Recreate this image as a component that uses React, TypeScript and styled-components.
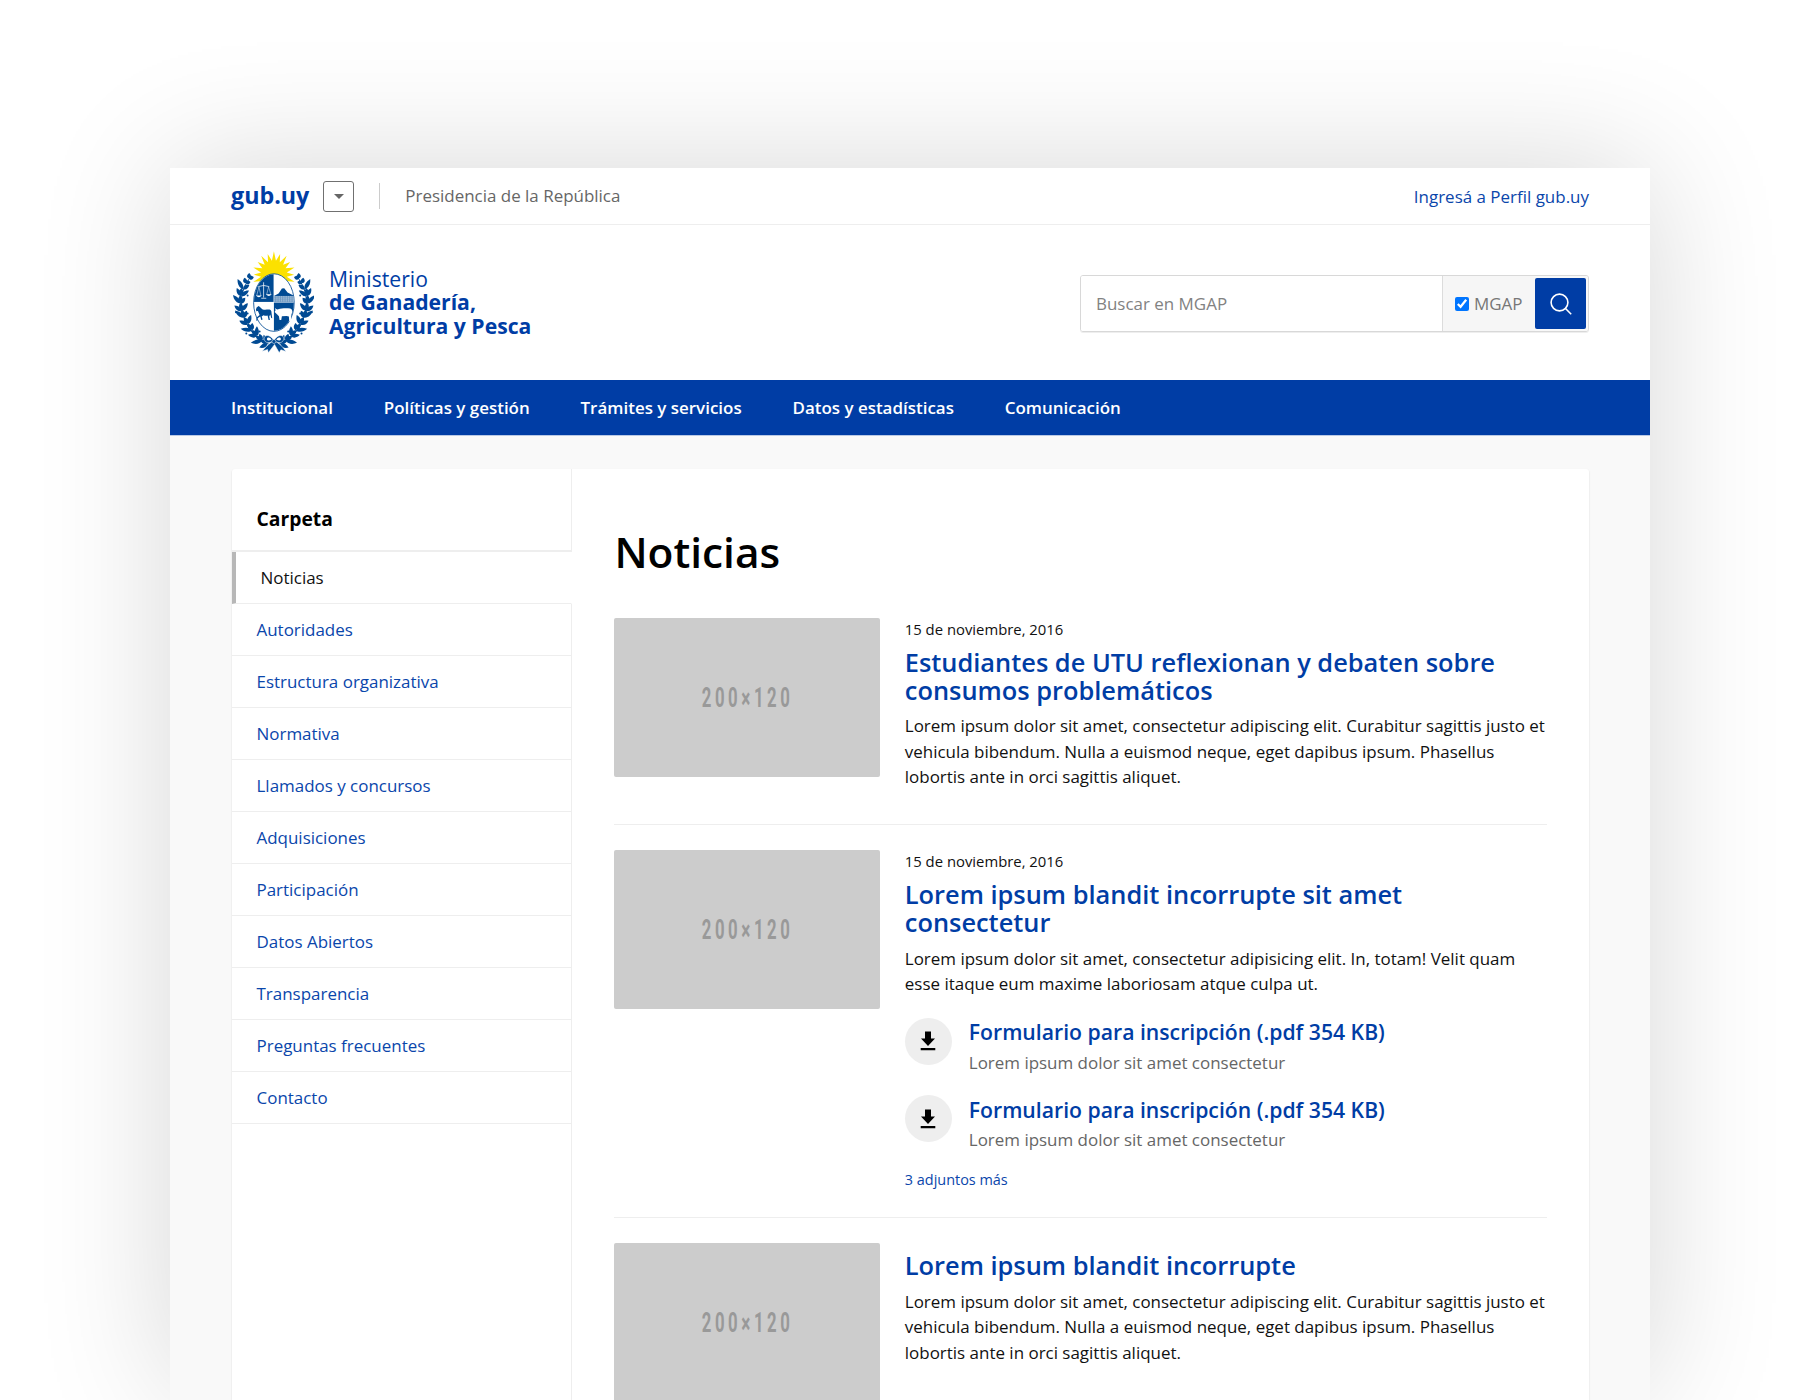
import React from "react";
import styled, { createGlobalStyle, css } from "styled-components";

const BLUE = "#003da5";
const LINK = "#0a46ab";
const LINE = "#eeeeee";
const CREST = "#004a93";

const Global = createGlobalStyle`
  html, body { margin: 0; background: #fff; }
  body { overflow: hidden; font-family: "Open Sans", "Noto Sans", sans-serif; font-size: 16.97px; line-height: 25.37px; color: #111; }
  *, *::before, *::after { box-sizing: border-box; }
  h1, h2, h3, p, ul { margin: 0; padding: 0; }
  ul { list-style: none; }
  a { color: inherit; text-decoration: none; }
`;

const Stage = styled.div`
  height: 1400px;
  overflow: hidden;
  padding: 168px 170px 0;
`;

const Backdrop = styled.div`
  height: 1222px;
  box-shadow: 0 0 125px rgba(0, 0, 0, 0.16);
`;

const Page = styled.div`
  height: 1600px;
  display: flex;
  flex-direction: column;
  background: #f9f9f9;
`;

const TopBar = styled.div`
  flex: none;
  display: flex;
  align-items: center;
  height: 57px;
  padding: 0 61px;
  background: #fff;
  border-bottom: 1px solid ${LINE};
`;

const Brand = styled.a`
  font-size: 23.25px;
  font-weight: 700;
  color: ${BLUE};
`;

const DropButton = styled.button`
  display: grid;
  place-items: center;
  width: 31px;
  height: 31px;
  margin: 0 25px 0 14px;
  padding: 0;
  background: #fff;
  border: 1px solid #707070;
  border-radius: 3px;
`;

const Caret = styled.span`
  border: solid transparent;
  border-width: 5px 5px 0;
  border-top-color: #666;
`;

const Separator = styled.span`
  width: 1px;
  height: 26px;
  margin-right: 25px;
  background: #ccc;
`;

const Office = styled.span`
  color: #666;
`;

const Profile = styled.a`
  margin-left: auto;
  padding-top: 2px;
  color: ${LINK};
`;

const Header = styled.header`
  flex: none;
  display: flex;
  align-items: center;
  justify-content: space-between;
  height: 155px;
  padding: 0 61px 0 62.5px;
  background: #fff;
`;

const Identity = styled.a`
  display: flex;
  align-items: center;
  gap: 15px;
`;

const Ministry = styled.span`
  margin-top: -1px;
  font-size: 21.17px;
  line-height: 23.4px;
  color: ${BLUE};
  b { display: block; font-weight: 700; }
`;

const SearchBox = styled.form`
  display: flex;
  width: 509px;
  height: 57px;
  margin-top: 2px;
  border: 1px solid #d8d8d8;
  border-radius: 3px;
  box-shadow: 0 1px 0 #eee;
  overflow: hidden;
`;

const SearchField = styled.input`
  flex: 1;
  min-width: 0;
  padding: 0 15px;
  border: 0;
  outline: 0;
  font: inherit;
  &::placeholder { color: #828282; opacity: 1; }
`;

const Scope = styled.label`
  display: flex;
  align-items: center;
  gap: 5px;
  padding: 0 12.5px;
  background: #f6f6f6;
  border-left: 1px solid #dcdcdc;
  color: #777;
`;

const Check = styled.input`
  width: 14px;
  height: 14px;
  margin: 0;
  accent-color: #0075ff;
`;

const SearchButton = styled.button`
  display: grid;
  place-items: center start;
  flex: none;
  width: 53px;
  padding: 0;
  border: 0;
  background: #f8f8f8;
  span {
    display: grid;
    place-items: center;
    width: 51px;
    height: 51px;
    background: ${BLUE};
    border-radius: 2px;
  }
`;

const Nav = styled.nav`
  flex: none;
  display: flex;
  align-items: center;
  gap: 50.8px;
  height: 56px;
  padding: 0 61px;
  background: ${BLUE};
  border-bottom: 1px solid #b9c9e6;
  color: #fff;
  font-weight: 600;
`;

const Panel = styled.main`
  flex: 1;
  display: flex;
  margin: 33px 61px 0 61.5px;
  background: #fff;
  border-radius: 3px;
  box-shadow: 0 1px 2px rgba(0, 0, 0, 0.14);
`;

const Sidebar = styled.aside`
  flex: none;
  width: 340.5px;
  display: flex;
  flex-direction: column;
`;

const SideTitle = styled.h3`
  height: 83px;
  padding: 37px 25px 0;
  border-right: 1px solid ${LINE};
  border-bottom: 2px solid ${LINE};
  font-size: 19.3px;
  line-height: 25px;
  font-weight: 700;
  color: #000;
`;

const SideItem = styled.li<{ $active?: boolean }>`
  height: 52px;
  padding: 13px 25px 0;
  border-bottom: 1px solid ${LINE};
  border-right: 1px solid ${LINE};
  color: ${LINK};
  ${(p) =>
    p.$active &&
    css`
      color: #111;
      border-left: 4px solid #b7b7b7;
      border-right-color: #fff;
    `}
`;

const SideRest = styled.div`
  flex: 1;
  border-right: 1px solid ${LINE};
`;

const Content = styled.section`
  flex: 1;
  min-width: 0;
  padding: 59px 41.6px 0 42.4px;
`;

const PageTitle = styled.h1`
  margin-bottom: 42px;
  font-size: 42.4px;
  line-height: 48px;
  font-weight: 600;
  color: #000;
`;

const Article = styled.article<{ $pad: string }>`
  display: flex;
  gap: 25px;
  padding-bottom: ${(p) => p.$pad};
  margin-bottom: 25.3px;
  border-bottom: 1px solid ${LINE};
`;

const Thumb = styled.div`
  flex: none;
  display: flex;
  align-items: center;
  justify-content: center;
  width: 265.4px;
  height: 159px;
  background: #ccc;
  border-radius: 2px;
`;

const ThumbLabel = styled.span`
  display: flex;
  align-items: center;
  padding: 2px 0 0 2px;
  font-family: Roboto, sans-serif;
  font-weight: 700;
  font-size: 27.4px;
  letter-spacing: 5.8px;
  color: #999;
  transform: scaleX(0.61);
  small { font-size: 28px; letter-spacing: 6px; }
`;

const Body = styled.div`
  flex: 1;
  min-width: 0;
`;

const DateLine = styled.div`
  margin-bottom: 8px;
  font-size: 14.85px;
  line-height: 22px;
`;

const Headline = styled.h2<{ $top?: boolean }>`
  padding-top: ${(p) => (p.$top ? "8px" : "0")};
  margin-bottom: 9.4px;
  font-size: 25.4px;
  line-height: 28px;
  font-weight: 600;
  color: ${BLUE};
`;

const Files = styled.ul`
  display: flex;
  flex-direction: column;
  gap: 17px;
  padding-top: 21px;
`;

const FileRow = styled.li`
  display: flex;
  gap: 17px;
  height: 60.3px;
`;

const Disc = styled.span`
  flex: none;
  display: grid;
  place-items: center;
  width: 47px;
  height: 47px;
  margin-top: 0.5px;
  border-radius: 50%;
  background: #eee;
`;

const FileTitle = styled.h3`
  padding-top: 1px;
  font-size: 21.2px;
  line-height: 27px;
  font-weight: 600;
  color: ${BLUE};
`;

const FileNote = styled.p`
  padding-top: 4.5px;
  color: #666;
`;

const More = styled.a`
  display: block;
  margin-top: 14px;
  font-size: 14.45px;
  line-height: 22px;
  color: ${LINK};
`;

/* Points along one branch of the laurel, from the knot to the tip. */
const branch: [number, number, number][] = [
  [322, 552, 200], [306, 543, 210], [291, 529, 222], [276, 512, 233],
  [263, 494, 243], [252, 474, 253], [245, 454, 262], [242, 432, 268],
  [243, 410, 277], [249, 389, 287], [257, 371, 297], [267, 357, 306],
];

const Leaf = ({ x, y, a, l = 25 }: { x: number; y: number; a: number; l?: number }) => (
  <path
    d={`M0 0C${l * 0.25} -10 ${l * 0.7} -8 ${l} 0C${l * 0.6} 7 ${l * 0.25} 7 0 0Z`}
    transform={`translate(${x} ${y}) rotate(${a})`}
  />
);

const Laurel = () => (
  <g fill={CREST}>
    <path d="M330 556C280 538 245 490 243 430C243 398 254 374 272 350" fill="none" stroke={CREST} strokeWidth="3" />
    {branch.map(([x, y, a], i) => (
      <g key={i}>
        <Leaf x={x} y={y} a={a - 46 + (i % 3) * 5} l={i > 9 ? 17 : i % 2 ? 35 : 28} />
        <Leaf x={x} y={y} a={a + 46 - (i % 2) * 8} l={i > 9 ? 14 : i % 2 ? 22 : 29} />
        {i < 9 && <Leaf x={x} y={y - 3} a={a - 4} l={22} />}
      </g>
    ))}
    {[[234, 396], [262, 408], [227, 458], [262, 462], [258, 522], [298, 516]].map(([x, y]) => (
      <circle key={`${x}-${y}`} cx={x} cy={y} r="3" />
    ))}
  </g>
);

const sunPoints = Array.from({ length: 40 }, (_, i) => {
  const t = (i / 40) * Math.PI * 2 - Math.PI / 2;
  const r = i % 2 ? 42 : i % 4 ? 65 : 70;
  return `${(341 + Math.cos(t) * r * 0.93).toFixed(1)},${(345 + Math.sin(t) * r).toFixed(1)}`;
}).join(" ");

const Crest = () => (
  <svg width="81.5" height="102.5" viewBox="218 274 245 308">
    <polygon points={sunPoints} fill="#fbe100" />
    <Laurel />
    <g transform="translate(682 0) scale(-1 1)"><Laurel /></g>
    <clipPath id="lower"><rect x="270" y="380" width="142" height="150" /></clipPath>
    <ellipse cx="341" cy="429" rx="66" ry="91" fill="#fff" clipPath="url(#lower)" />
    <ellipse cx="341" cy="429" rx="61" ry="86.500" fill="#fff" stroke={CREST} strokeWidth="2.5" />
    <clipPath id="shield"><ellipse cx="341" cy="429" rx="60" ry="85" /></clipPath>
    <g clipPath="url(#shield)">
      <rect x="280" y="343" width="60" height="84" fill={CREST} />
      <rect x="341" y="429" width="62" height="88" fill={CREST} />
      <path d="M341 409L355 402L365 387L372 386L382 399L402 409Z" fill={CREST} />
      <rect x="341" y="409" width="62" height="19" fill="#6f99c2" />
      <path d="M341 412h62M341 418h62M341 424h62" stroke="#fff" strokeWidth="1.6" strokeDasharray="4 3" />
    </g>
    <g fill="none" stroke="#fff" strokeWidth="2.2">
      <path d="M310 368V414M294 381Q310 374 327 381M303 416h15" />
      <path d="M296 382l-7 27M296 382l6 27M325 382l-6 23M325 382l7 23" strokeWidth="1.4" />
    </g>
    <path d="M287 408h17q-8 10-17 0ZM317 404h17q-8 10-17 0Z" fill="#fff" />
    <path d="M289 444l6-5 4 3 7 7c7 3 13 1 19 1 8 0 9 6 9 12l2 14-3-1-3-10-3 6 2 10h-4l-3-13c-4 1-8 1-12-1l-6 4 3 9-4 1-3-10-8 5-1 8-3-1 1-9 9-8-5-12-5 1-1-5Z" fill={CREST} />
    <path d="M344 445q5 6 10 4c10-3 25-3 36-2q7 2 6 11l-3 9-1 18h-5l-1-14-7-2-14 1-2 11h-5l-2-11-5-5-8-8 3-5Z" fill="#fff" />
    <g fill={CREST} stroke="#fff" strokeWidth="1.5">
      <path d="M338 544L318 561L306 575L322 570L324 580L343 555L357 580L362 571L377 576L366 561L345 544Z" />
      <path d="M341 543C327 521 310 526 312 540C315 553 330 551 341 543ZM341 543C355 521 372 526 370 540C367 553 352 551 341 543Z" />
      <path d="M334 540C327 532 320 533 320 539C322 545 328 544 334 540ZM348 540C355 532 362 533 362 539C360 545 354 544 348 540Z" fill="#fff" stroke="none" />
      <circle cx="341" cy="546" r="6" />
    </g>
  </svg>
);

const DownloadIcon = () => (
  <svg width="16" height="20" viewBox="0 0 16 20">
    <path d="M5 .5h6v7h4L8 15 1 7.500h4ZM.7 17h14.600v2.200H.7Z" fill="#000" />
  </svg>
);

const SearchIcon = () => (
  <svg width="22" height="22" viewBox="0 0 22 22" fill="none" stroke="#fff" strokeWidth="1.6">
    <circle cx="9.500" cy="9.500" r="8.400" />
    <path d="M15.500 15.500L21.200 21.200" />
  </svg>
);

const Placeholder = () => (
  <Thumb>
    <ThumbLabel>200<small>×</small>120</ThumbLabel>
  </Thumb>
);

const navItems = ["Institucional", "Políticas y gestión", "Trámites y servicios", "Datos y estadísticas", "Comunicación"];
const sideItems = [
  "Noticias", "Autoridades", "Estructura organizativa", "Normativa", "Llamados y concursos", "Adquisiciones",
  "Participación", "Datos Abiertos", "Transparencia", "Preguntas frecuentes", "Contacto",
];
const longText =
  "Lorem ipsum dolor sit amet, consectetur adipiscing elit. Curabitur sagittis justo et vehicula bibendum. Nulla a euismod neque, eget dapibus ipsum. Phasellus lobortis ante in orci sagittis aliquet.";

type News = { date?: string; title: string; text: string; files?: number; pad: string };
const news: News[] = [
  { date: "15 de noviembre, 2016", title: "Estudiantes de UTU reflexionan y debaten sobre consumos problemáticos", text: longText, pad: "34.3px" },
  {
    date: "15 de noviembre, 2016",
    title: "Lorem ipsum blandit incorrupte sit amet consectetur",
    text: "Lorem ipsum dolor sit amet, consectetur adipisicing elit. In, totam! Velit quam esse itaque eum maxime laboriosam atque culpa ut.",
    files: 2,
    pad: "26.3px",
  },
  { title: "Lorem ipsum blandit incorrupte", text: longText, pad: "34px" },
];

export default function App() {
  return (
    <Stage>
      <Global />
      <Backdrop>
        <Page>
          <TopBar>
            <Brand href="#">gub.uy</Brand>
            <DropButton aria-label="Desplegar"><Caret /></DropButton>
            <Separator />
            <Office>Presidencia de la República</Office>
            <Profile href="#">Ingresá a Perfil gub.uy</Profile>
          </TopBar>
          <Header>
            <Identity href="#">
              <Crest />
              <Ministry>Ministerio<b>de Ganadería,</b><b>Agricultura y Pesca</b></Ministry>
            </Identity>
            <SearchBox>
              <SearchField placeholder="Buscar en MGAP" />
              <Scope><Check type="checkbox" defaultChecked />MGAP</Scope>
              <SearchButton type="button" aria-label="Buscar"><span><SearchIcon /></span></SearchButton>
            </SearchBox>
          </Header>
          <Nav>{navItems.map((n) => <a key={n} href="#">{n}</a>)}</Nav>
          <Panel>
            <Sidebar>
              <SideTitle>Carpeta</SideTitle>
              <ul>
                {sideItems.map((s, i) => (
                  <SideItem key={s} $active={i === 0}><a href="#">{s}</a></SideItem>
                ))}
              </ul>
              <SideRest />
            </Sidebar>
            <Content>
              <PageTitle>Noticias</PageTitle>
              {news.map((n) => (
                <Article key={n.title} $pad={n.pad}>
                  <Placeholder />
                  <Body>
                    {n.date && <DateLine>{n.date}</DateLine>}
                    <Headline $top={!n.date}>{n.title}</Headline>
                    <p>{n.text}</p>
                    {n.files && (
                      <>
                        <Files>
                          {Array.from({ length: n.files }, (_, i) => (
                            <FileRow key={i}>
                              <Disc><DownloadIcon /></Disc>
                              <div>
                                <FileTitle>Formulario para inscripción (.pdf 354 KB)</FileTitle>
                                <FileNote>Lorem ipsum dolor sit amet consectetur</FileNote>
                              </div>
                            </FileRow>
                          ))}
                        </Files>
                        <More href="#">3 adjuntos más</More>
                      </>
                    )}
                  </Body>
                </Article>
              ))}
            </Content>
          </Panel>
        </Page>
      </Backdrop>
    </Stage>
  );
}
